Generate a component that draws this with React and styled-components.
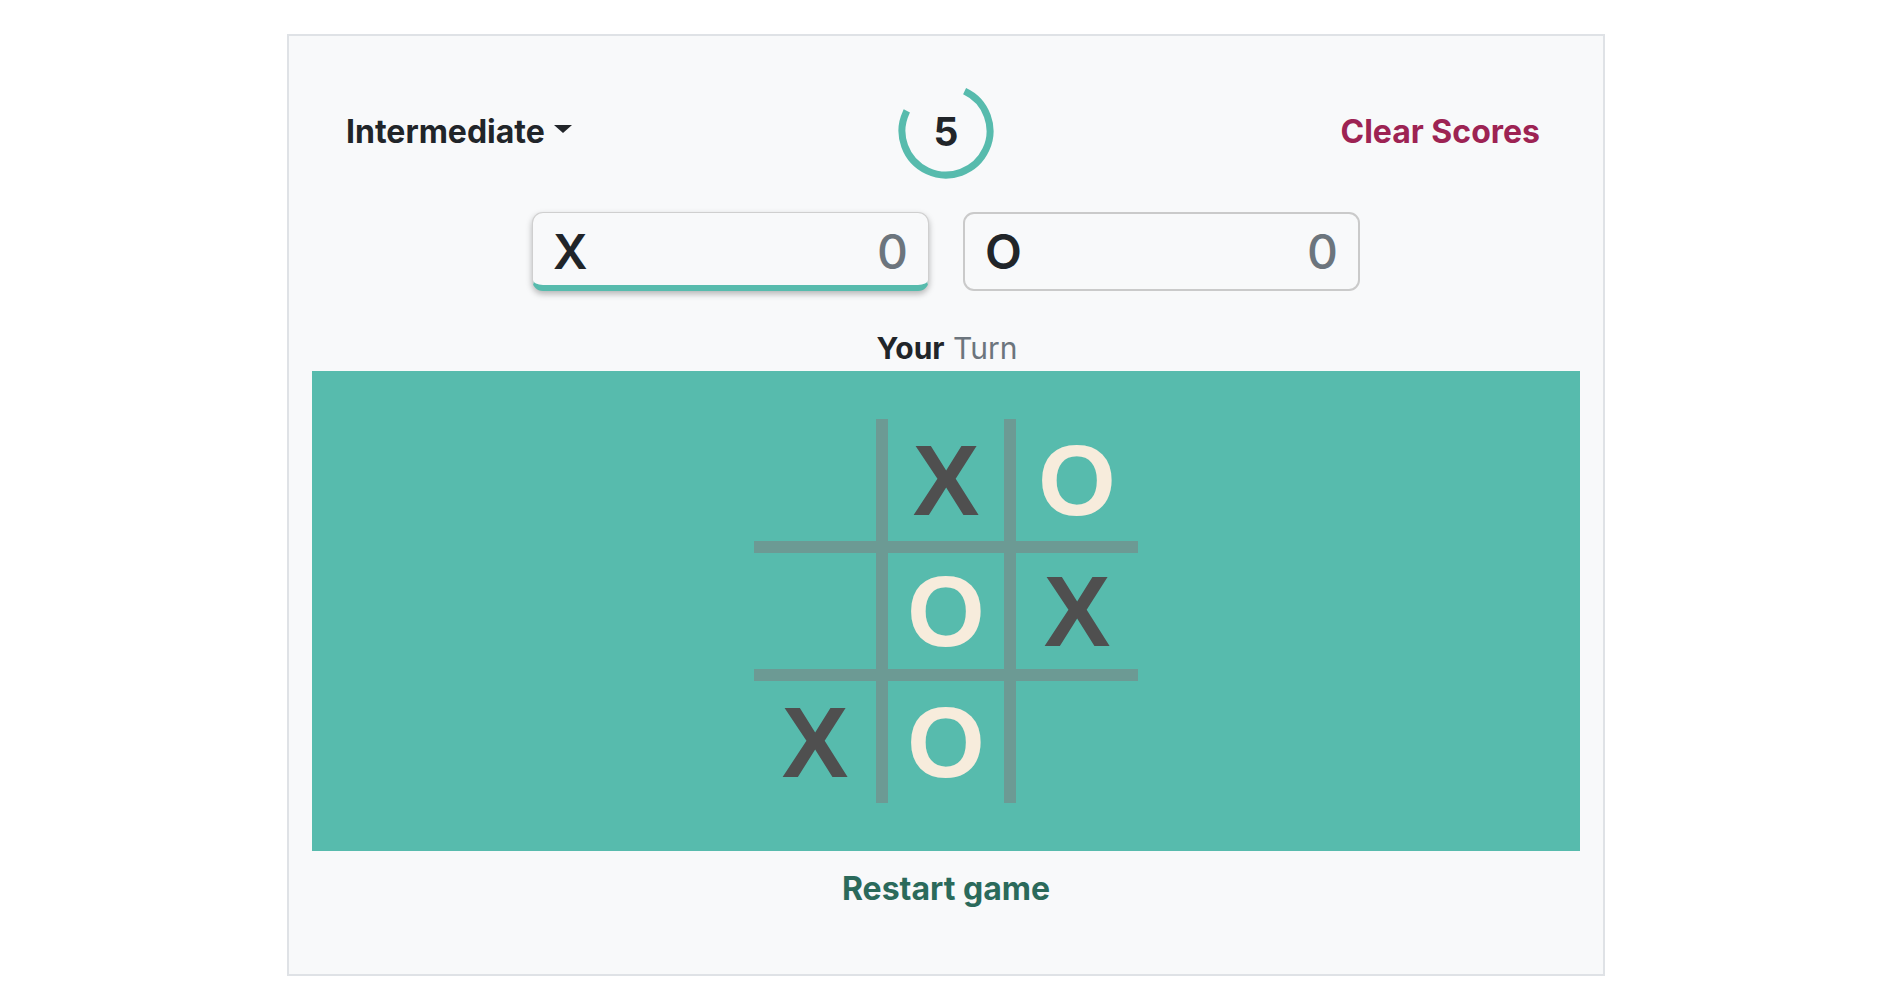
import React from "react";
import styled, { createGlobalStyle } from "styled-components";

const GlobalStyle = createGlobalStyle`
  html, body { margin: 0; padding: 0; background: #ffffff; }
  body { font-family: Inter, "Noto Sans", sans-serif; color: #212529; }
  * { box-sizing: border-box; }
`;

const Page = styled.div`
  padding-top: 34px;
  padding-left: 287px;
`;

const Panel = styled.div`
  width: 1318px;
  height: 942px;
  background: #f8f9fa;
  border: 2px solid #dfe2e6;
  padding: 47px 23px 0;
  display: flex;
  flex-direction: column;
  align-items: stretch;
`;

const Header = styled.div`
  display: grid;
  grid-template-columns: 1fr auto 1fr;
  align-items: center;
  height: 96px;
  padding: 0 34px;
`;

const Dropdown = styled.button`
  justify-self: start;
  background: none;
  border: none;
  padding: 0;
  font-family: inherit;
  font-size: 32px;
  font-weight: 700;
  color: #212529;
  display: flex;
  align-items: center;
  cursor: pointer;
`;

const Caret = styled.span`
  display: inline-block;
  margin-left: 9px;
  width: 0;
  height: 0;
  border-top: 8px solid #212529;
  border-left: 9px solid transparent;
  border-right: 9px solid transparent;
  margin-top: -4px;
`;

const ClearButton = styled.button`
  justify-self: end;
  margin-right: 6px;
  background: none;
  border: none;
  padding: 0;
  font-family: inherit;
  font-size: 32px;
  font-weight: 700;
  color: #9d2353;
  cursor: pointer;
`;

const Timer = styled.div`
  position: relative;
  width: 96px;
  height: 96px;
  display: flex;
  align-items: center;
  justify-content: center;
`;

const TimerRing = styled.svg`
  position: absolute;
  inset: 0;
`;

const TimerValue = styled.span`
  position: relative;
  font-size: 39px;
  font-weight: 700;
  color: #212529;
`;

const Scores = styled.div`
  display: flex;
  justify-content: center;
  gap: 34px;
  margin-top: 33px;
`;

const ScoreBox = styled.div`
  width: 397px;
  height: 79px;
  display: flex;
  align-items: center;
  justify-content: space-between;
  padding: 0 20px;
  border-radius: 11px;
  background: #f8f9fa;
  border: ${(p) => (p.$active ? "1px solid #cfcfcf" : "2px solid #cacaca")};
  border-bottom: ${(p) => (p.$active ? "6px solid #57bbad" : "2px solid #cacaca")};
  box-shadow: ${(p) => (p.$active ? "0 3px 6px rgba(0,0,0,0.28)" : "none")};
`;

const ScoreMark = styled.span`
  font-size: 48px;
  font-weight: 600;
  color: #212529;
  margin-top: ${(p) => (p.$active ? "4px" : "0")};
`;

const ScoreCount = styled.span`
  font-size: 48px;
  font-weight: 500;
  color: #6c757d;
  margin-top: ${(p) => (p.$active ? "4px" : "0")};
`;

const TurnLabel = styled.div`
  text-align: center;
  font-size: 30px;
  line-height: 36px;
  margin-top: 39px;
  padding-left: 2px;
`;

const TurnStrong = styled.strong`
  font-weight: 700;
  color: #212529;
`;

const TurnMuted = styled.span`
  font-weight: 400;
  color: #6c757d;
`;

const Board = styled.div`
  margin-top: 5px;
  height: 480px;
  background: #57bbad;
  display: flex;
  align-items: center;
  justify-content: center;
`;

const Grid = styled.div`
  display: grid;
  grid-template-columns: repeat(3, 128px);
  grid-template-rows: repeat(3, 128px);
`;

const LINE = "#6c9a94";

const Cell = styled.div`
  display: flex;
  align-items: center;
  justify-content: center;
  font-family: "Liberation Sans", Arial, sans-serif;
  font-weight: 700;
  font-size: 100px;
  line-height: 1;
  color: ${(p) => (p.$mark === "X" ? "#4f4f4f" : "#f7ecdc")};
  border-left: ${(p) => (p.$col > 0 ? `6px solid ${LINE}` : "none")};
  border-right: ${(p) => (p.$col < 2 ? `6px solid ${LINE}` : "none")};
  border-top: ${(p) => (p.$row > 0 ? `6px solid ${LINE}` : "none")};
  border-bottom: ${(p) => (p.$row < 2 ? `6px solid ${LINE}` : "none")};
`;

const RestartButton = styled.button`
  align-self: center;
  margin-top: 20px;
  background: none;
  border: none;
  padding: 0;
  font-family: inherit;
  font-size: 32px;
  line-height: 36px;
  font-weight: 700;
  color: #2b6a5b;
  cursor: pointer;
`;

const board = [
  ["", "X", "O"],
  ["", "O", "X"],
  ["X", "O", ""],
];

function TimerCircle({ value, fraction }) {
  const r = 44;
  const c = 2 * Math.PI * r;
  return (
    <Timer>
      <TimerRing width="96" height="96" viewBox="0 0 96 96">
        <circle
          cx="48"
          cy="48"
          r={r}
          fill="none"
          stroke="#57bbad"
          strokeWidth="7"
          strokeDasharray={`${c * fraction} ${c}`}
          transform="rotate(-65 48 48)"
        />
      </TimerRing>
      <TimerValue>{value}</TimerValue>
    </Timer>
  );
}

export default function App() {
  return (
    <>
      <GlobalStyle />
      <Page>
        <Panel>
          <Header>
            <Dropdown>
              Intermediate
              <Caret />
            </Dropdown>
            <TimerCircle value={5} fraction={0.755} />
            <ClearButton>Clear Scores</ClearButton>
          </Header>
          <Scores>
            <ScoreBox $active>
              <ScoreMark $active>X</ScoreMark>
              <ScoreCount $active>0</ScoreCount>
            </ScoreBox>
            <ScoreBox>
              <ScoreMark>O</ScoreMark>
              <ScoreCount>0</ScoreCount>
            </ScoreBox>
          </Scores>
          <TurnLabel>
            <TurnStrong>Your</TurnStrong> <TurnMuted>Turn</TurnMuted>
          </TurnLabel>
          <Board>
            <Grid>
              {board.map((row, ri) =>
                row.map((mark, ci) => (
                  <Cell key={`${ri}-${ci}`} $row={ri} $col={ci} $mark={mark}>
                    {mark}
                  </Cell>
                ))
              )}
            </Grid>
          </Board>
          <RestartButton>Restart game</RestartButton>
        </Panel>
      </Page>
    </>
  );
}
